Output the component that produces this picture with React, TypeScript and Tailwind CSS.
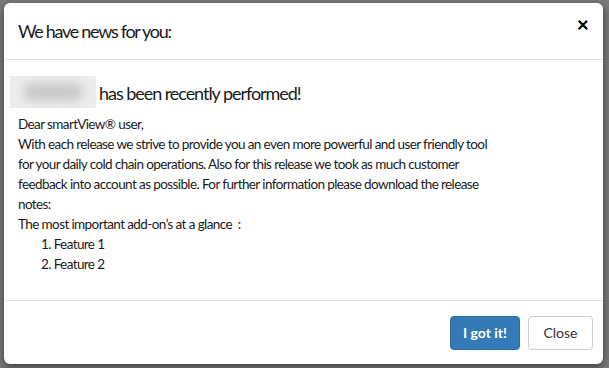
import React from "react";

export default function App() {
  return (
    <div className="w-[609px] h-[368px] bg-[#7a7a7a] overflow-hidden pt-[3px] pl-[4px]" style={{ fontFamily: "Lato, 'Noto Sans', sans-serif" }}>
      <div className="w-[599px] h-[361px] bg-white rounded-[6px] flex flex-col shadow-[0_3px_9px_rgba(0,0,0,0.5)] text-[#1a1a1a]">
        <div className="h-[57px] border-b border-[#e5e5e5] flex items-start justify-between pl-[14px] pr-[14px]">
          <div className="text-[18px] leading-[22px] tracking-[-1.3px] mt-[17px]">We have news for you:</div>
          <div className="text-[21px] font-black leading-none text-black mt-[10px]">×</div>
        </div>
        <div className="flex-1 flex flex-col pl-[14px] pr-[10px]">
          <div className="flex items-center mt-[16px] -ml-[8px]">
            <div className="w-[86px] h-[32px] bg-[#ececec] flex items-center justify-center">
              <div className="w-[60px] h-[18px] rounded-full bg-[#c9c9c9] blur-[5px]" />
            </div>
            <div className="text-[18px] ml-[3px] tracking-[-1.05px] mt-[2px]">has been recently performed!</div>
          </div>
          <div className="mt-[6px] text-[13.5px] leading-[20px] tracking-[-0.6px] whitespace-nowrap">
            <div>Dear smartView® user,</div>
            <div>With each release we strive to provide you an even more powerful and user friendly tool</div>
            <div>for your daily cold chain operations. Also for this release we took as much customer</div>
            <div>feedback into account as possible. For further information please download the release</div>
            <div>notes:</div>
            <div>The most important add-on’s at a glance&nbsp; :</div>
            <ol className="pl-[23px]">
              <li>1. Feature 1</li>
              <li>2. Feature 2</li>
            </ol>
          </div>
        </div>
        <div className="h-[64px] border-t border-[#e5e5e5] flex items-center justify-end gap-[8px] pr-[10px]">
          <button className="h-[34px] w-[70px] rounded-[4px] bg-[#337ab7] border border-[#2e6da4] text-white text-[14px] font-bold">
            I got it!
          </button>
          <button className="h-[34px] w-[65px] rounded-[4px] bg-white border border-[#cccccc] text-[#333] text-[14px]">
            Close
          </button>
        </div>
      </div>
    </div>
  );
}
